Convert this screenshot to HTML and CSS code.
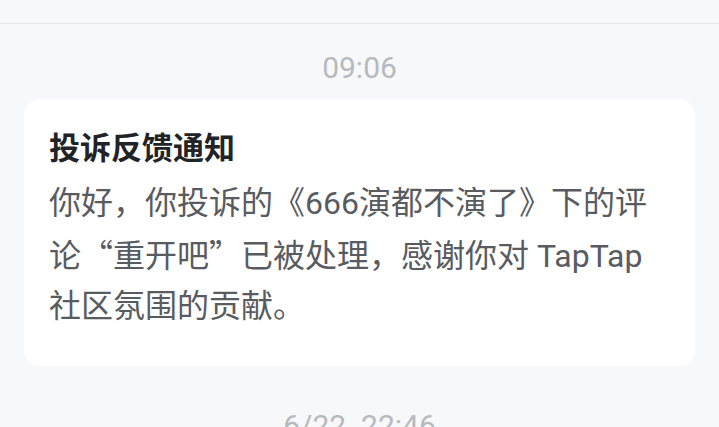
FILE: index.html
```html
<!DOCTYPE html>
<html lang="zh-CN">
<head>
<meta charset="utf-8">
<link rel="stylesheet" href="styles.css">
</head>
<body>
<div class="topbar"></div>
<div class="feed">
  <div class="time">09:06</div>
  <div class="card">
    <div class="title">投诉反馈通知</div>
    <div class="body">你好，你投诉的《666演都不演了》下的评论<span class="cjk">“</span>重开吧<span class="cjk">”</span>已被处理，感谢你对 TapTap 社区氛围的贡献。</div>
  </div>
  <div class="time time-next">6/22&nbsp; 22:46</div>
</div>
</body>
</html>
```

FILE: styles.css
```css
html, body {
  margin: 0;
  padding: 0;
  background: #f7f8fa;
  height: 100%;
  overflow: hidden;
}
body {
  font-family: Roboto, "Noto Sans CJK SC", sans-serif;
}
.topbar {
  height: 23px;
  border-bottom: 1px solid #e6e7ea;
}
.feed {
  display: flex;
  flex-direction: column;
  padding: 0 24px;
}
.time {
  font-size: 30px;
  line-height: 36px;
  color: #b6babf;
  text-align: center;
  margin-top: 26px;
  margin-bottom: 13px;
}
.time-next {
  margin-top: 42px;
}
.card {
  background: #ffffff;
  border-radius: 16px;
  padding: 27px 25px 35px 25px;
}
.title {
  font-family: "Noto Sans CJK SC", sans-serif;
  font-size: 31px;
  line-height: 40px;
  font-weight: 700;
  color: #222326;
  margin-bottom: 12px;
}
.body {
  font-size: 32px;
  line-height: 50px;
  color: #585b60;
}
.cjk {
  font-family: "Noto Sans CJK SC", sans-serif;
}
```
